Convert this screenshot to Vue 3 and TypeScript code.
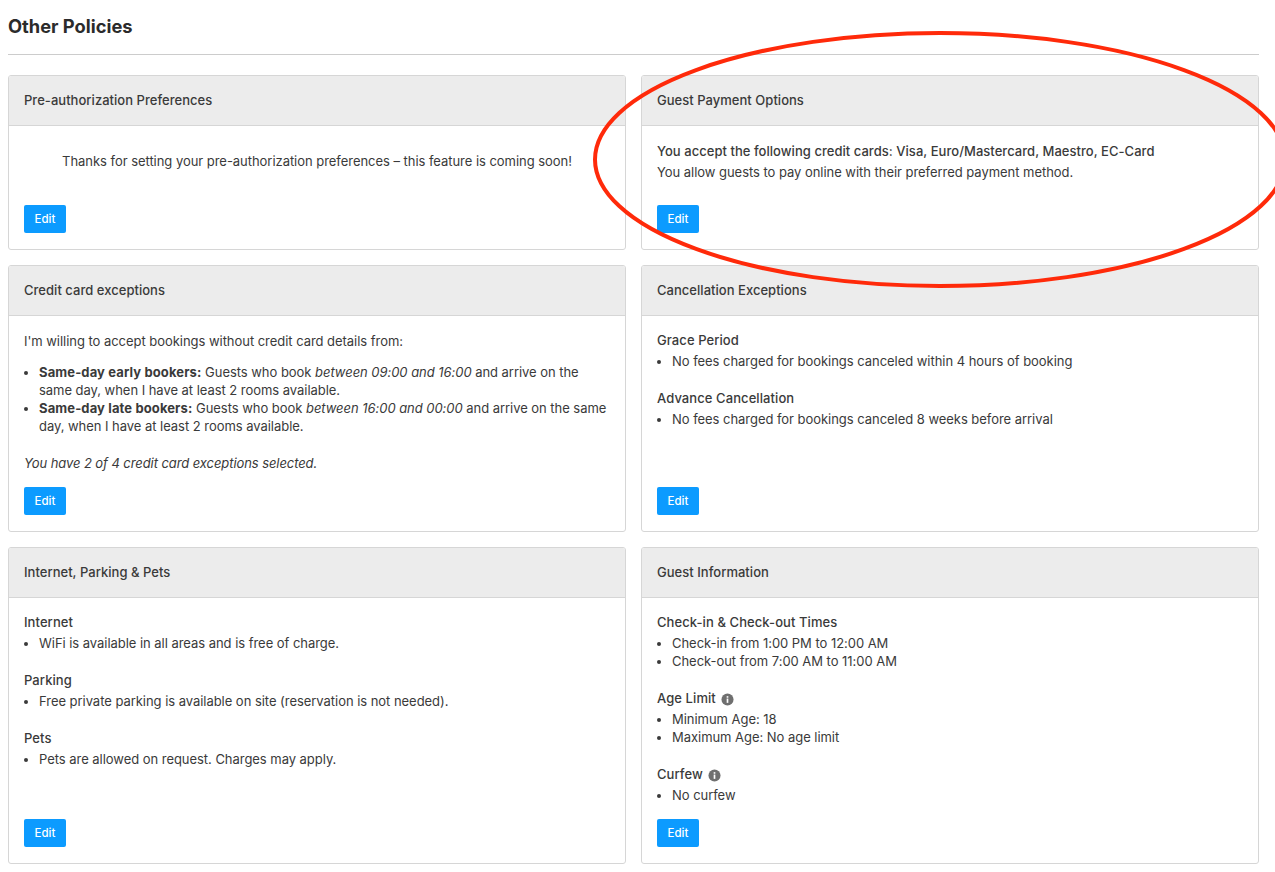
<script setup lang="ts">
interface Group { title: string; info?: boolean; items: string[] }
const cancellation: Group[] = [
  { title: 'Grace Period', items: ['No fees charged for bookings canceled within 4 hours of booking'] },
  { title: 'Advance Cancellation', items: ['No fees charged for bookings canceled 8 weeks before arrival'] },
]
const internet: Group[] = [
  { title: 'Internet', items: ['WiFi is available in all areas and is free of charge.'] },
  { title: 'Parking', items: ['Free private parking is available on site (reservation is not needed).'] },
  { title: 'Pets', items: ['Pets are allowed on request. Charges may apply.'] },
]
const guest: Group[] = [
  { title: 'Check-in & Check-out Times', items: ['Check-in from 1:00 PM to 12:00 AM', 'Check-out from 7:00 AM to 11:00 AM'] },
  { title: 'Age Limit', info: true, items: ['Minimum Age: 18', 'Maximum Age: No age limit'] },
  { title: 'Curfew', info: true, items: ['No curfew'] },
]
const panels = [
  { title: 'Internet, Parking & Pets', groups: internet },
  { title: 'Guest Information', groups: guest },
]
</script>

<template>
  <div class="page">
    <h1 class="title">Other Policies</h1>
    <div class="grid">
      <section class="card">
        <header class="head">Pre-authorization Preferences</header>
        <div class="body first">
          <p class="center">Thanks for setting your pre-authorization preferences – this feature is coming soon!</p>
          <button class="edit">Edit</button>
        </div>
      </section>
      <section class="card">
        <header class="head">Guest Payment Options</header>
        <div class="body first">
          <p class="strong">You accept the following credit cards: Visa, Euro/Mastercard, Maestro, EC-Card</p>
          <p class="second">You allow guests to pay online with their preferred payment method.</p>
          <button class="edit">Edit</button>
        </div>
      </section>
      <section class="card">
        <header class="head">Credit card exceptions</header>
        <div class="body first">
          <p class="lead">I'm willing to accept bookings without credit card details from:</p>
          <ul>
            <li><b>Same-day early bookers:</b> Guests who book <i>between 09:00 and 16:00</i> and arrive on the same day, when I have at least 2 rooms available.</li>
            <li><b>Same-day late bookers:</b> Guests who book <i>between 16:00 and 00:00</i> and arrive on the same day, when I have at least 2 rooms available.</li>
          </ul>
          <p class="note"><i>You have 2 of 4 credit card exceptions selected.</i></p>
          <button class="edit">Edit</button>
        </div>
      </section>
      <section class="card">
        <header class="head">Cancellation Exceptions</header>
        <div class="body">
          <div v-for="g in cancellation" :key="g.title" class="group">
            <div class="group-title">{{ g.title }}</div>
            <ul><li v-for="i in g.items" :key="i">{{ i }}</li></ul>
          </div>
          <button class="edit">Edit</button>
        </div>
      </section>
      <section v-for="p in panels" :key="p.title" class="card">
        <header class="head">{{ p.title }}</header>
        <div class="body">
          <div v-for="g in p.groups" :key="g.title" class="group">
            <div class="group-title">
              {{ g.title }}
              <svg v-if="g.info" class="info" viewBox="0 0 14 14" aria-hidden="true">
                <circle cx="7" cy="7" r="6.5" fill="#6f6f6f" />
                <rect x="6.1" y="6" width="1.8" height="4.6" fill="#fff" />
                <rect x="6.1" y="3.4" width="1.8" height="1.7" fill="#fff" />
              </svg>
            </div>
            <ul><li v-for="i in g.items" :key="i">{{ i }}</li></ul>
          </div>
          <button class="edit">Edit</button>
        </div>
      </section>
    </div>
    <svg class="ring" width="700" height="270" viewBox="0 0 700 270" aria-hidden="true">
      <ellipse cx="346" cy="130.5" rx="345" ry="126.5" fill="none" stroke="#ff2a0a" stroke-width="4" />
    </svg>
  </div>
</template>

<style>
html, body { margin: 0; background: #fff; overflow: hidden; }
</style>

<style scoped>
.page {
  position: relative;
  width: 1275px;
  height: 872px;
  box-sizing: border-box;
  padding: 0 16px 0 8px;
  overflow: hidden;
  font-family: Inter, "Liberation Sans", sans-serif;
  font-size: 13px;
  letter-spacing: -0.04px;
  line-height: 18px;
  color: #3a3a3a;
}
.title {
  margin: 0 0 20px;
  height: 55px;
  box-sizing: border-box;
  padding-top: 15px;
  border-bottom: 1px solid #ccc;
  font-size: 18.3px;
  line-height: 22px;
  font-weight: 700;
  letter-spacing: 0;
  color: #2b2b2b;
}
.grid {
  display: grid;
  grid-template-columns: 618px 618px;
  grid-template-rows: 175px 267px 317px;
  column-gap: 15px;
  row-gap: 15px;
}
.card {
  display: flex;
  flex-direction: column;
  box-sizing: border-box;
  border: 1px solid #d6d6d6;
  border-radius: 3px;
  overflow: hidden;
}
.head {
  flex: none;
  box-sizing: border-box;
  height: 50px;
  padding: 15px;
  background: #ececec;
  border-bottom: 1px solid #d6d6d6;
  letter-spacing: 0.03px;
  font-weight: 500;
}
.body {
  flex: 1;
  display: flex;
  flex-direction: column;
  padding: 15px 15px 16px;
}
.body.first { padding-top: 16px; }
p { margin: 0; }
b { letter-spacing: 0.12px; }
.center { text-align: center; padding-top: 10px; }
.strong { letter-spacing: 0.04px; font-weight: 500; }
.second { margin-top: 3px; }
.lead { margin-bottom: 13px; }
.note { margin-top: 19px; letter-spacing: -0.08px; }
ul { margin: 0; padding-left: 15px; }
.group + .group { margin-top: 19px; }
.group-title { margin-bottom: 3px; letter-spacing: 0.08px; font-weight: 500; display: flex; align-items: center; gap: 5px; }
.info { width: 13px; height: 13px; margin-top: 2px; }
.edit {
  margin-top: auto;
  width: 42px;
  height: 28px;
  padding: 0;
  border: 0;
  border-radius: 2px;
  background: #0c9bff;
  color: #fff;
  font: 500 11.5px Inter, "Liberation Sans", sans-serif;
  align-self: flex-start;
}
.ring {
  position: absolute;
  left: 594px;
  top: 29px;
  overflow: visible;
  pointer-events: none;
}
</style>
